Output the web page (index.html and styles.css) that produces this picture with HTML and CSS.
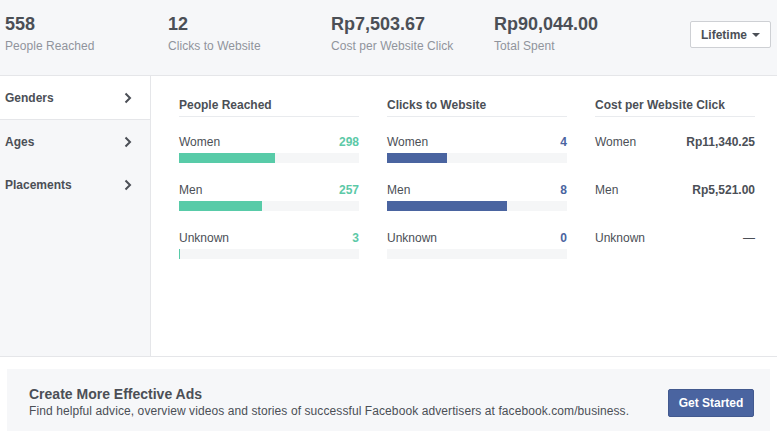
FILE: index.html
```
<!DOCTYPE html>
<html>
<head>
<meta charset="utf-8">
<link rel="stylesheet" href="styles.css">
</head>
<body>
<div class="topbar">
  <div class="stats">
    <div class="stat"><div class="stat-num">558</div><div class="stat-label">People Reached</div></div>
    <div class="stat"><div class="stat-num">12</div><div class="stat-label">Clicks to Website</div></div>
    <div class="stat"><div class="stat-num">Rp7,503.67</div><div class="stat-label">Cost per Website Click</div></div>
    <div class="stat"><div class="stat-num">Rp90,044.00</div><div class="stat-label">Total Spent</div></div>
  </div>
  <button class="period">Lifetime <span class="caret"></span></button>
</div>
<div class="body">
  <div class="sidebar">
    <div class="side-item active"><span>Genders</span><svg class="chev" width="8" height="12" viewBox="0 0 8 12"><path d="M1.5 1.5 L6 6 L1.5 10.5" fill="none" stroke="#4b4f56" stroke-width="2"/></svg></div>
    <div class="side-item"><span>Ages</span><svg class="chev" width="8" height="12" viewBox="0 0 8 12"><path d="M1.5 1.5 L6 6 L1.5 10.5" fill="none" stroke="#4b4f56" stroke-width="2"/></svg></div>
    <div class="side-item"><span>Placements</span><svg class="chev" width="8" height="12" viewBox="0 0 8 12"><path d="M1.5 1.5 L6 6 L1.5 10.5" fill="none" stroke="#4b4f56" stroke-width="2"/></svg></div>
  </div>
  <div class="main">
    <div class="col">
      <div class="col-head">People Reached</div>
      <div class="rows">
        <div class="row"><div class="row-top"><span>Women</span><span class="val teal">298</span></div><div class="track"><div class="fill teal-bg" style="width:53.4%"></div></div></div>
        <div class="row"><div class="row-top"><span>Men</span><span class="val teal">257</span></div><div class="track"><div class="fill teal-bg" style="width:46%"></div></div></div>
        <div class="row"><div class="row-top"><span>Unknown</span><span class="val teal">3</span></div><div class="track"><div class="fill teal-bg" style="width:1px"></div></div></div>
      </div>
    </div>
    <div class="col">
      <div class="col-head">Clicks to Website</div>
      <div class="rows">
        <div class="row"><div class="row-top"><span>Women</span><span class="val blue">4</span></div><div class="track"><div class="fill blue-bg" style="width:33.3%"></div></div></div>
        <div class="row"><div class="row-top"><span>Men</span><span class="val blue">8</span></div><div class="track"><div class="fill blue-bg" style="width:66.7%"></div></div></div>
        <div class="row"><div class="row-top"><span>Unknown</span><span class="val blue">0</span></div><div class="track"><div class="fill blue-bg" style="width:0"></div></div></div>
      </div>
    </div>
    <div class="col narrow">
      <div class="col-head">Cost per Website Click</div>
      <div class="rows">
        <div class="row"><div class="row-top"><span>Women</span><span class="val">Rp11,340.25</span></div></div>
        <div class="row"><div class="row-top"><span>Men</span><span class="val">Rp5,521.00</span></div></div>
        <div class="row"><div class="row-top"><span>Unknown</span><span class="val dash">—</span></div></div>
      </div>
    </div>
  </div>
</div>
<div class="promo">
  <div class="promo-text">
    <div class="promo-title">Create More Effective Ads</div>
    <div class="promo-sub">Find helpful advice, overview videos and stories of successful Facebook advertisers at facebook.com/business.</div>
  </div>
  <button class="cta">Get Started</button>
</div>
</body>
</html>
```
FILE: styles.css
```
* { box-sizing: border-box; }
html, body { margin: 0; padding: 0; background: #fff; }
body {
  width: 777px;
  height: 431px;
  overflow: hidden;
  font-family: "Liberation Sans", Arial, sans-serif;
  color: #4b4f56;
  font-size: 12px;
}
.topbar {
  height: 76px;
  background: #f6f7f9;
  border-bottom: 1px solid #e5e6e9;
  display: flex;
  align-items: flex-start;
  justify-content: space-between;
  padding: 13px 6px 0 5px;
}
.stats { display: flex; }
.stat { width: 163px; }
.stat-num { font-size: 18px; line-height: 22px; font-weight: bold; color: #4b4f56; }
.stat-label { font-size: 12px; line-height: 16px; color: #90949c; margin-top: 3px; letter-spacing: 0.05px; }
.period {
  margin-top: 8px;
  width: 81px;
  height: 27px;
  background: #fff;
  border: 1px solid #ced0d4;
  border-radius: 2px;
  font-family: "Liberation Sans", Arial, sans-serif;
  font-size: 12px;
  font-weight: bold;
  color: #4b4f56;
  display: flex;
  align-items: center;
  justify-content: center;
  gap: 5px;
  padding: 0;
}
.caret {
  width: 0; height: 0;
  border-left: 4px solid transparent;
  border-right: 4px solid transparent;
  border-top: 4px solid #4b4f56;
  margin-top: 1px;
}
.body {
  display: flex;
  height: 281px;
  border-bottom: 1px solid #e5e6e9;
}
.sidebar {
  width: 151px;
  background: #f6f7f9;
  border-right: 1px solid #e5e6e9;
}
.side-item {
  height: 43px;
  display: flex;
  align-items: center;
  justify-content: space-between;
  padding: 1px 18px 0 5px;
  font-weight: bold;
  font-size: 12px;
  color: #4b4f56;
}
.side-item.active {
  background: #fff;
  height: 44px;
  border-bottom: 1px solid #e5e6e9;
}
.chev { display: block; }
.main {
  flex: 1;
  display: flex;
  gap: 28px;
  padding: 20px 0 0 28px;
}
.col { width: 180px; }
.col.narrow { width: 160px; }
.col-head {
  font-weight: bold;
  line-height: 16px;
  padding-top: 1px;
  padding-bottom: 3px;
  border-bottom: 1px solid #e9ebee;
}
.rows {
  display: flex;
  flex-direction: column;
  gap: 18px;
  padding-top: 16px;
}
.row { height: 30px; }
.row-top {
  display: flex;
  justify-content: space-between;
  line-height: 16px;
  padding-top: 1px;
  height: 16px;
  color: #4b4f56;
}
.val { font-weight: bold; }
.teal { color: #5cc9a7; }
.blue { color: #4a64a0; }
.dash { font-weight: normal; }
.track {
  margin-top: 4px;
  height: 10px;
  background: #f5f6f7;
}
.fill { height: 10px; }
.teal-bg { background: #58cba8; }
.blue-bg { background: #4a64a0; }
.promo {
  margin: 12px 7px 0 7px;
  height: 70px;
  background: #f6f7f9;
  display: flex;
  align-items: flex-start;
  justify-content: space-between;
  padding: 16px 16px 0 22px;
}
.promo-title { font-size: 14px; line-height: 18px; font-weight: bold; color: #4b4f56; }
.promo-sub { font-size: 12px; line-height: 16px; color: #4b4f56; letter-spacing: 0.09px; }
.cta {
  margin-top: 4px;
  width: 86px;
  height: 28px;
  background: #4a64a0;
  border: 1px solid #42598f;
  border-radius: 2px;
  color: #fff;
  font-family: "Liberation Sans", Arial, sans-serif;
  font-size: 12px;
  font-weight: bold;
  padding: 0;
}
```
